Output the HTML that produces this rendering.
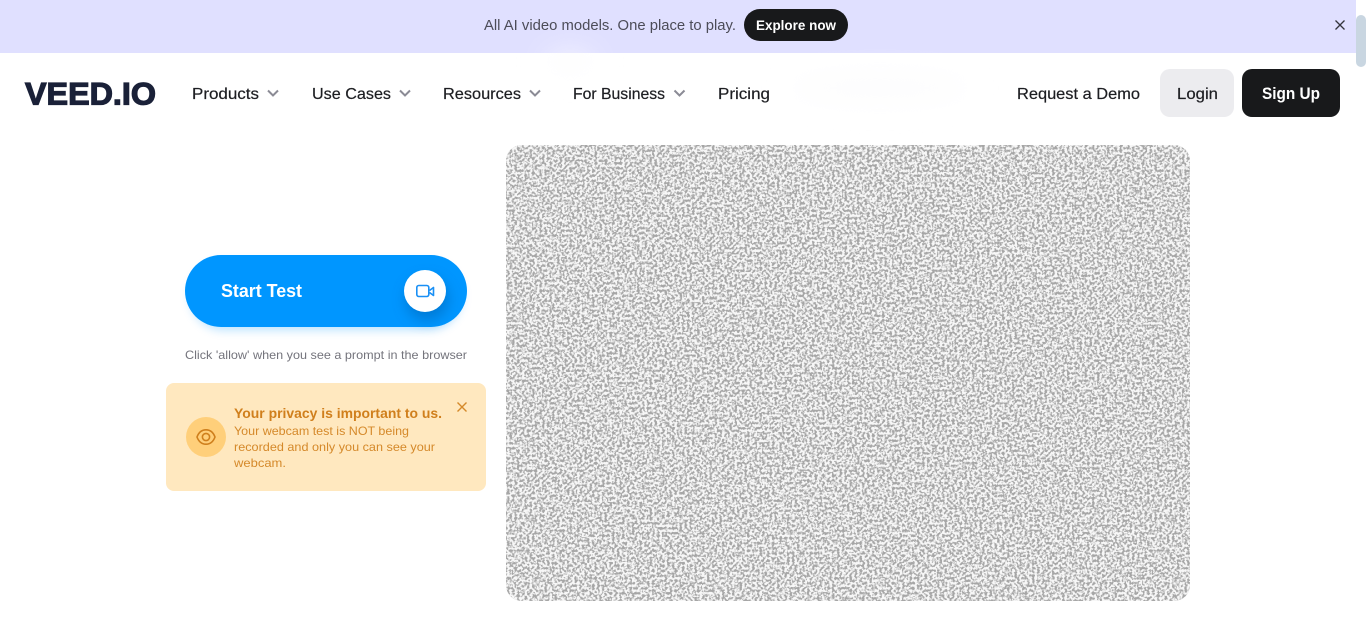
<!DOCTYPE html>
<html lang="en">
<head>
<meta charset="utf-8">
<title>Webcam Test - VEED.IO</title>
<style>
html,body{margin:0;padding:0;background:#fff;width:1366px;height:631px;overflow:hidden}
svg{display:block;position:absolute;left:0;top:0}
text{font-family:"Liberation Sans",sans-serif}
</style>
</head>
<body>
<svg width="1366" height="631" viewBox="0 0 1366 631" xmlns="http://www.w3.org/2000/svg">
<defs>
<filter id="noise" x="0" y="0" width="100%" height="100%" color-interpolation-filters="sRGB">
<feTurbulence type="fractalNoise" baseFrequency="0.4" numOctaves="2" seed="7" result="t"/>
<feColorMatrix in="t" type="matrix" values="0 0 0 0 0.97 0 0 0 0 0.97 0 0 0 0 0.97 0 0 0 5 -1.900"/>
</filter>
<clipPath id="clipNoise"><rect x="506" y="145" width="684" height="456" rx="16"/></clipPath>
<filter id="blur" x="-60%" y="-400%" width="220%" height="900%"><feGaussianBlur stdDeviation="14"/></filter>
<filter id="shadow" x="-40%" y="-40%" width="200%" height="200%"><feGaussianBlur stdDeviation="7"/></filter>
<filter id="btnShadow" x="-20%" y="-40%" width="140%" height="200%"><feGaussianBlur stdDeviation="5"/></filter>
</defs>

<rect x="0" y="0" width="1356" height="53" fill="#e0e0ff"/>
<rect x="1356" y="15" width="10" height="52" rx="5" fill="#c9d6e1"/>

<ellipse cx="880" cy="88" rx="90" ry="12" fill="#fcfcfd" filter="url(#blur)"/>
<ellipse cx="570" cy="62" rx="25" ry="8" fill="#fcfcfd" filter="url(#blur)"/>

<text x="484" y="30" font-size="14.500" fill="#4c4c58" textLength="252" lengthAdjust="spacingAndGlyphs">All AI video models. One place to play.</text>
<rect x="744" y="9" width="104" height="32" rx="16" fill="#18191b"/>
<text x="756" y="30" font-size="14" font-weight="700" fill="#fff" textLength="80" lengthAdjust="spacingAndGlyphs">Explore now</text>
<path d="M1335.500 20.500l9 9M1344.500 20.500l-9 9" stroke="#33343c" stroke-width="1.300" fill="none"/>

<text x="25" y="104.500" font-size="31.500" font-weight="700" fill="#1a2138" stroke="#1a2138" stroke-width="1.200" textLength="131" lengthAdjust="spacingAndGlyphs">VEED.IO</text>

<g font-size="16" fill="#1d1e22" stroke="#1d1e22" stroke-width="0.200">
<text x="192" y="99" textLength="67" lengthAdjust="spacingAndGlyphs">Products</text>
<text x="312" y="99" textLength="79" lengthAdjust="spacingAndGlyphs">Use Cases</text>
<text x="443" y="99" textLength="78" lengthAdjust="spacingAndGlyphs">Resources</text>
<text x="573" y="99" textLength="92" lengthAdjust="spacingAndGlyphs">For Business</text>
<text x="718" y="99" textLength="52" lengthAdjust="spacingAndGlyphs">Pricing</text>
<text x="1017" y="99" textLength="123" lengthAdjust="spacingAndGlyphs">Request a Demo</text>
</g>
<g fill="none" stroke="#8b8b95" stroke-width="2">
<path d="M268 90.500l5 5 5-5"/>
<path d="M400 90.500l5 5 5-5"/>
<path d="M530 90.500l5 5 5-5"/>
<path d="M674.500 90.500l5 5 5-5"/>
</g>

<rect x="1160" y="69" width="74" height="48" rx="10" fill="#ececef"/>
<text x="1177" y="99" font-size="16" fill="#1d1e22" stroke="#1d1e22" stroke-width="0.200" textLength="41" lengthAdjust="spacingAndGlyphs">Login</text>
<rect x="1242" y="69" width="98" height="48" rx="10" fill="#18191b"/>
<text x="1262" y="99" font-size="16.500" font-weight="700" fill="#fff" textLength="58" lengthAdjust="spacingAndGlyphs">Sign Up</text>

<g clip-path="url(#clipNoise)">
<rect x="506" y="145" width="684" height="456" fill="#a6a6a6"/>
<rect x="506" y="145" width="684" height="456" fill="#fff" filter="url(#noise)"/>
</g>

<rect x="190" y="262" width="272" height="68" rx="34" fill="#0096ff" opacity=".28" filter="url(#btnShadow)"/>
<rect x="185" y="255" width="282" height="72" rx="36" fill="#0096ff"/>
<circle cx="427" cy="299" r="21" fill="#0062b0" opacity=".55" filter="url(#shadow)"/>
<circle cx="425" cy="291" r="21" fill="#fff"/>
<rect x="416.800" y="285.500" width="12" height="11" rx="2" fill="none" stroke="#1a90f5" stroke-width="1.600"/>
<path d="M429.500 290.500l4-3v8l-4-3" fill="none" stroke="#1a90f5" stroke-width="1.600" stroke-linejoin="round"/>
<text x="221" y="297" font-size="18.500" font-weight="700" fill="#fff" textLength="81" lengthAdjust="spacingAndGlyphs">Start Test</text>

<text x="185" y="359" font-size="12" fill="#74747c" textLength="282" lengthAdjust="spacingAndGlyphs">Click 'allow' when you see a prompt in the browser</text>

<rect x="166" y="383" width="320" height="108" rx="8" fill="#ffe8bf"/>
<circle cx="206" cy="437" r="20" fill="#ffcf7a"/>
<path d="M197 437c1.800-4.800 5-7.200 9-7.200s7.200 2.400 9 7.200c-1.800 4.800-5 7.200-9 7.200s-7.200-2.400-9-7.200z" fill="none" stroke="#cf7f1c" stroke-width="1.600"/>
<circle cx="206" cy="437" r="3.600" fill="none" stroke="#cf7f1c" stroke-width="1.600"/>
<text x="234" y="418" font-size="14" font-weight="700" fill="#d07f1c" textLength="208" lengthAdjust="spacingAndGlyphs">Your privacy is important to us.</text>
<g font-size="12" fill="#d5892a">
<text x="234" y="435" textLength="175" lengthAdjust="spacingAndGlyphs">Your webcam test is NOT being</text>
<text x="234" y="451" textLength="201" lengthAdjust="spacingAndGlyphs">recorded and only you can see your</text>
<text x="234" y="467" textLength="52" lengthAdjust="spacingAndGlyphs">webcam.</text>
</g>
<path d="M457.500 402.500l9 9M466.500 402.500l-9 9" stroke="#d5892a" stroke-width="1.400" fill="none"/>
</svg>
</body>
</html>
